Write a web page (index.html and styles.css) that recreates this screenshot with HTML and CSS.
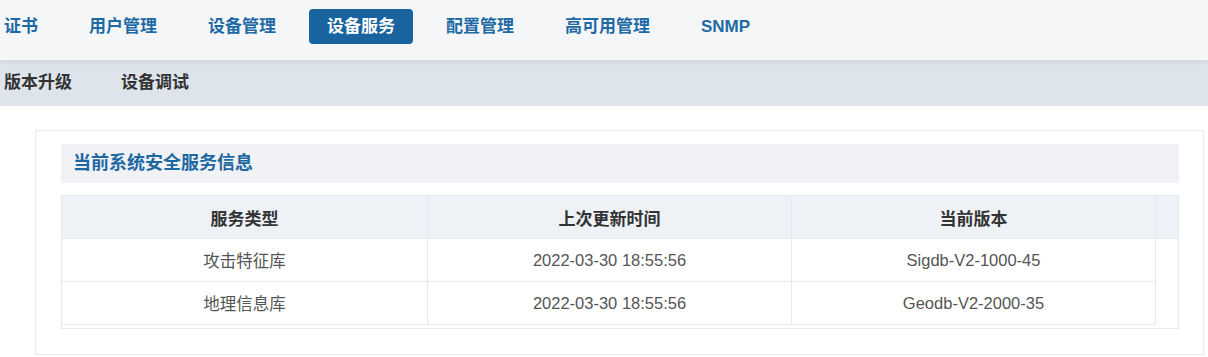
FILE: index.html
```html
<!DOCTYPE html>
<html lang="zh-CN">
<head>
    <meta charset="UTF-8">
    <title>设备服务</title>
    <link rel="stylesheet" href="styles.css">
</head>
<body>
    <div class="topnav">
        <ul class="menu">
            <li>证书</li>
            <li>用户管理</li>
            <li>设备管理</li>
            <li class="active">设备服务</li>
            <li>配置管理</li>
            <li>高可用管理</li>
            <li>SNMP</li>
        </ul>
    </div>

    <div class="subnav">
        <ul class="submenu">
            <li>版本升级</li>
            <li>设备调试</li>
        </ul>
    </div>

    <div class="content">
        <div class="panel">
            <div class="panel-title">当前系统安全服务信息</div>

            <div class="grid">
                <table>
                    <thead>
                        <tr>
                            <th class="c1">服务类型</th>
                            <th class="c2">上次更新时间</th>
                            <th class="c3">当前版本</th>
                            <th class="gutter"></th>
                        </tr>
                    </thead>
                    <tbody>
                        <tr>
                            <td>攻击特征库</td>
                            <td>2022-03-30 18:55:56</td>
                            <td>Sigdb-V2-1000-45</td>
                            <td class="gutter"></td>
                        </tr>
                        <tr>
                            <td>地理信息库</td>
                            <td>2022-03-30 18:55:56</td>
                            <td>Geodb-V2-2000-35</td>
                            <td class="gutter"></td>
                        </tr>
                    </tbody>
                </table>
            </div>
        </div>
    </div>
</body>
</html>
```

FILE: styles.css
```css
body {
    margin: 0;
    font-family: "Liberation Sans", "Noto Sans CJK SC", sans-serif;
    background-color: #fff;
    color: #333;
}

ul {
    list-style: none;
    margin: 0;
    padding: 0;
}

/* top menu */
.topnav {
    position: relative;
    z-index: 1;
    height: 60px;
    box-sizing: border-box;
    padding-top: 9px;
    background-color: #f5f6f8;
    box-shadow: 0 2px 5px rgba(0,0,0,0.07);
}

.menu {
    display: flex;
    gap: 15px;
    margin-left: -14px;
}

.menu li {
    height: 35px;
    line-height: 35px;
    padding: 0 18px;
    border-radius: 4px;
    font-size: 17px;
    font-weight: bold;
    color: #1f6aa5;
}

.menu li.active {
    background-color: #19649e;
    color: #fff;
}

/* second menu */
.subnav {
    height: 46px;
    background-color: #dee4ec;
}

.submenu {
    display: flex;
    gap: 13px;
    margin-left: -14px;
}

.submenu li {
    height: 46px;
    line-height: 46px;
    padding: 0 18px;
    font-size: 17px;
    font-weight: bold;
    color: #333;
}

/* content */
.content {
    padding: 24px 4px 0 35px;
}

.panel {
    border: 1px solid #e8eaed;
    padding: 13px 24px 25px 25px;
}

.panel-title {
    height: 39px;
    line-height: 39px;
    padding-left: 12px;
    margin-bottom: 12px;
    background-color: #f0f2f5;
    font-size: 18px;
    font-weight: bold;
    color: #1d67a3;
}

.grid {
    border: 1px solid #e4e8ef;
    padding-bottom: 3px;
}

.grid table {
    width: 100%;
    border-collapse: collapse;
    table-layout: fixed;
}

.grid th,
.grid td {
    height: 42px;
    padding: 0;
    text-align: center;
    border-right: 1px solid #e4e8ef;
    border-bottom: 1px solid #e4e8ef;
}

.grid th {
    background-color: #eef2f7;
    font-size: 17px;
    font-weight: bold;
    color: #333;
}

.grid td {
    font-size: 16.5px;
    color: #555;
}

.grid .c1 { width: 365px; }
.grid .c2 { width: 363px; }
.grid .c3 { width: 363px; }

.grid th.gutter {
    border-right: none;
}

.grid td.gutter {
    border: none;
}
```
